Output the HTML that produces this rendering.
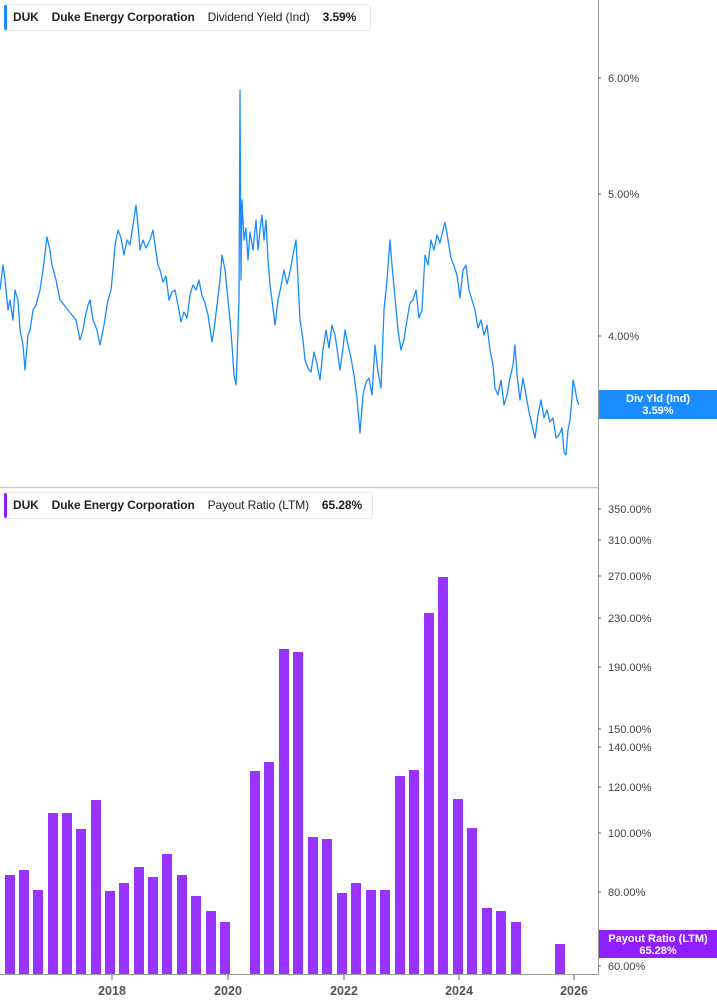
<!DOCTYPE html>
<html><head><meta charset="utf-8"><style>
body{margin:0;width:717px;height:1005px;background:#fff;overflow:hidden;font-family:"Liberation Sans",Arial,sans-serif;}
svg{position:absolute;left:0;top:0}
.leg{position:absolute;left:4px;height:25px;border:1px solid #e8e8e8;border-radius:3px;background:#fff;font-size:12px;line-height:25px;color:#222;padding-left:8px;white-space:nowrap;letter-spacing:-0.1px}
.leg b{font-weight:bold}
.leg::before{content:"";position:absolute;left:-1px;top:0;width:3px;height:25px;border-radius:2px;background:var(--c)}
</style></head><body>
<svg width="717" height="1005" viewBox="0 0 717 1005" font-family="Liberation Sans, Arial, sans-serif">
<line x1="598.5" y1="0" x2="598.5" y2="975" stroke="#999" stroke-width="1"/>
<line x1="0" y1="487.5" x2="598" y2="487.5" stroke="#ccc" stroke-width="1.5"/>
<line x1="0" y1="974.5" x2="598" y2="974.5" stroke="#999" stroke-width="1"/>
<g font-size="11" fill="#444">
<text x="608" y="82">6.00%</text><text x="608" y="198">5.00%</text><text x="608" y="340">4.00%</text>
<text x="608" y="513">350.00%</text><text x="608" y="544">310.00%</text><text x="608" y="580">270.00%</text>
<text x="608" y="622">230.00%</text><text x="608" y="671">190.00%</text><text x="608" y="733">150.00%</text>
<text x="608" y="751">140.00%</text><text x="608" y="791">120.00%</text><text x="608" y="837">100.00%</text>
<text x="608" y="896">80.00%</text><text x="608" y="970">60.00%</text>
</g>
<g stroke="#666"><path d="M598 78h3M598 194h3M598 336h3M598 509h3M598 540h3M598 576h3M598 618h3M598 667h3M598 729h3M598 747h3M598 787h3M598 833h3M598 892h3M598 966h3M112 975v5M228 975v5M344 975v5M459 975v5M574 975v5"/></g>
<g font-size="12.5" font-weight="bold" fill="#555" text-anchor="middle">
<text x="112" y="995">2018</text><text x="228" y="995">2020</text><text x="344" y="995">2022</text><text x="459" y="995">2024</text><text x="574" y="995">2026</text>
</g>
<polyline fill="none" stroke="#1a8cff" stroke-width="1.3" stroke-linejoin="round" points="0,290 3,265 5,280 8,310 10,300 13,320 15,290 18,300 20,330 23,345 25,370 28,335 30,330 33,310 36,305 40,290 43,270 47,237 50,250 52,265 56,280 60,300 64,305 68,310 72,315 76,320 80,340 83,330 85,318 88,305 90,300 93,320 97,330 100,345 104,325 108,300 111,290 113,270 115,245 118,230 121,238 124,255 127,240 130,245 133,225 136,205 138,225 140,250 143,240 146,248 150,240 153,230 155,245 158,265 160,270 163,282 166,276 169,300 172,292 175,290 178,305 181,322 184,312 187,318 190,295 193,285 196,290 199,280 202,296 205,303 208,315 212,342 214,330 217,305 220,280 222,255 225,270 227,290 230,320 232,345 234,375 236,385 237,360 239,300 240,90 241,280 242,200 244,240 246,228 248,260 250,232 253,250 256,220 258,250 260,230 262,215 264,240 266,220 268,260 270,285 272,300 275,325 278,300 281,286 284,270 287,284 290,272 293,255 296,240 298,280 300,320 303,340 305,360 308,368 311,372 314,352 317,364 320,380 323,350 326,330 329,348 332,325 335,335 338,355 340,370 343,348 345,330 348,345 351,358 354,375 357,398 360,433 363,395 366,382 369,378 372,395 375,345 378,372 381,388 384,310 387,280 390,240 392,265 395,298 398,330 401,350 404,340 407,320 410,303 413,300 416,290 419,318 422,310 425,255 428,265 431,240 434,250 437,235 440,243 443,230 445,222 448,240 451,258 454,266 457,275 460,298 463,270 466,265 469,290 472,300 475,310 478,328 481,320 484,335 487,325 490,350 493,365 495,388 498,395 501,380 504,405 507,395 510,378 513,365 515,345 517,375 520,400 523,378 526,395 529,412 532,425 535,438 538,415 541,400 544,418 547,410 550,422 553,418 556,438 559,435 562,428 564,452 566,455 568,430 570,420 572,398 573,380 575,388 577,400 579,405"/>
<g fill="#9933ff">
<rect x="5" y="875" width="10" height="99"/><rect x="19" y="870" width="10" height="104"/><rect x="33" y="890" width="10" height="84"/>
<rect x="48" y="813" width="10" height="161"/><rect x="62" y="813" width="10" height="161"/><rect x="76" y="829" width="10" height="145"/>
<rect x="91" y="800" width="10" height="174"/><rect x="105" y="891" width="10" height="83"/><rect x="119" y="883" width="10" height="91"/>
<rect x="134" y="867" width="10" height="107"/><rect x="148" y="877" width="10" height="97"/><rect x="162" y="854" width="10" height="120"/>
<rect x="177" y="875" width="10" height="99"/><rect x="191" y="896" width="10" height="78"/><rect x="206" y="911" width="10" height="63"/>
<rect x="220" y="922" width="10" height="52"/><rect x="250" y="771" width="10" height="203"/><rect x="264" y="762" width="10" height="212"/>
<rect x="279" y="649" width="10" height="325"/><rect x="293" y="652" width="10" height="322"/><rect x="308" y="837" width="10" height="137"/>
<rect x="322" y="839" width="10" height="135"/><rect x="337" y="893" width="10" height="81"/><rect x="351" y="883" width="10" height="91"/>
<rect x="366" y="890" width="10" height="84"/><rect x="380" y="890" width="10" height="84"/><rect x="395" y="776" width="10" height="198"/>
<rect x="409" y="770" width="10" height="204"/><rect x="424" y="613" width="10" height="361"/><rect x="438" y="577" width="10" height="397"/>
<rect x="453" y="799" width="10" height="175"/><rect x="467" y="828" width="10" height="146"/><rect x="482" y="908" width="10" height="66"/>
<rect x="496" y="911" width="10" height="63"/><rect x="511" y="922" width="10" height="52"/><rect x="555" y="944" width="10" height="30"/>
</g>
<rect x="599" y="390" width="118" height="29" fill="#1a8cff"/>
<text x="658" y="402" font-size="11" font-weight="bold" fill="#fff" text-anchor="middle">Div Yld (Ind)</text>
<text x="658" y="414" font-size="11" font-weight="bold" fill="#fff" text-anchor="middle">3.59%</text>
<rect x="599" y="930" width="118" height="28" fill="#8f1fff"/>
<text x="658" y="942" font-size="11" font-weight="bold" fill="#fff" text-anchor="middle">Payout Ratio (LTM)</text>
<text x="658" y="954" font-size="11" font-weight="bold" fill="#fff" text-anchor="middle">65.28%</text>
</svg>
<div class="leg" style="top:4px;width:357px;--c:#1a8cff"><b>DUK</b>&nbsp;&nbsp;&nbsp; <b>Duke Energy Corporation</b>&nbsp;&nbsp;&nbsp; Dividend Yield (Ind)&nbsp;&nbsp;&nbsp; <b>3.59%</b></div>
<div class="leg" style="top:492px;width:359px;--c:#8f1fff"><b>DUK</b>&nbsp;&nbsp;&nbsp; <b>Duke Energy Corporation</b>&nbsp;&nbsp;&nbsp; Payout Ratio (LTM)&nbsp;&nbsp;&nbsp; <b>65.28%</b></div>
</body></html>
